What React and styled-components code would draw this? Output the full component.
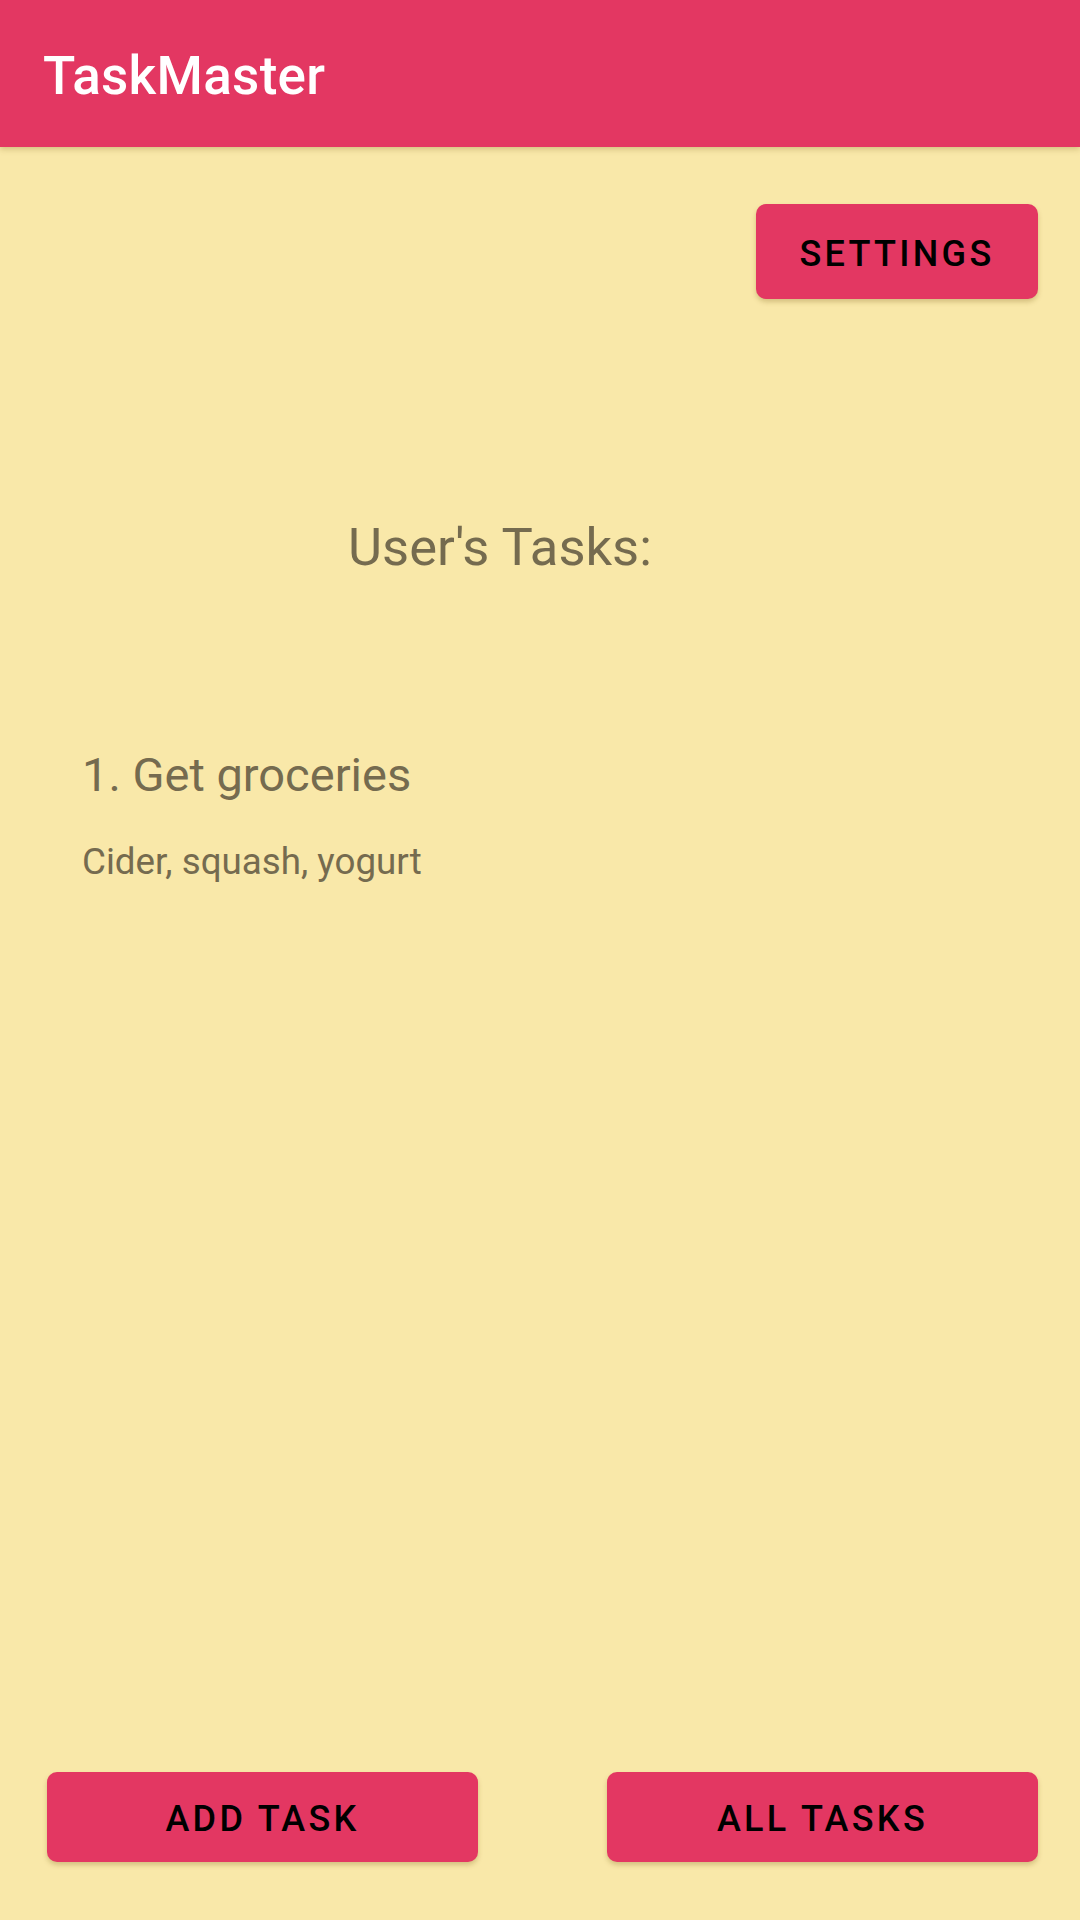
import React from 'react';
import styled, { createGlobalStyle } from 'styled-components';

const GlobalStyle = createGlobalStyle`
	html, body {
		margin: 0;
		padding: 0;
		background: #f9e8a9;
	}
	* {
		box-sizing: border-box;
	}
`;

const Page = styled.div`
	width: 1080px;
	min-height: 1920px;
	display: flex;
	flex-direction: column;
	background: #f9e8a9;
	font-family: Roboto, 'Noto Sans', sans-serif;
`;

const AppBar = styled.header`
	height: 147px;
	background: #e33762;
	display: flex;
	align-items: center;
	padding: 5px 0 0 43px;
	box-shadow: 0 2px 6px rgba(120, 90, 20, 0.3);
	position: relative;
	z-index: 1;

	> h1 {
		margin: 0;
		color: #ffffff;
		font-size: 53px;
		font-weight: 500;
		line-height: 1;
		letter-spacing: 0.3px;
	}
`;

const Content = styled.main`
	flex: 1;
	display: flex;
	flex-direction: column;
`;

const TopRow = styled.div`
	display: flex;
	justify-content: flex-end;
	padding: 57px 42px 0 0;
`;

const Button = styled.button`
	width: ${(p) => p.$width}px;
	height: ${(p) => p.$height}px;
	border: none;
	border-radius: 10px;
	background: #e33762;
	color: #000000;
	font-family: Roboto, 'Noto Sans', sans-serif;
	font-size: 36px;
	font-weight: 500;
	letter-spacing: 3.3px;
	text-transform: uppercase;
	box-shadow: 0 3px 5px rgba(120, 90, 20, 0.28);
	cursor: pointer;
	padding: 4px 0 0;
`;

const Heading = styled.h2`
	margin: 218px 0 0 348px;
	font-size: 52.5px;
	font-weight: 400;
	line-height: 1.172;
	color: #756b4f;
`;

const Task = styled.div`
	display: flex;
	flex-direction: column;
	padding-left: 82px;
	margin-top: 168px;
	color: #756b4f;

	> h3 {
		margin: 0;
		font-size: 47px;
		font-weight: 400;
		line-height: 1.172;
	}

	> p {
		margin: 38px 0 0;
		font-size: 36.75px;
		font-weight: 400;
		line-height: 1.172;
	}
`;

const Spacer = styled.div`
	flex: 1;
`;

const BottomRow = styled.div`
	display: flex;
	justify-content: space-between;
	padding: 0 42px 58px 47px;
`;

function App() {
	return (
		<Page>
			<GlobalStyle />
			<AppBar>
				<h1>TaskMaster</h1>
			</AppBar>
			<Content>
				<TopRow>
					<Button $width={282} $height={95}>Settings</Button>
				</TopRow>
				<Heading>User's Tasks:</Heading>
				<Task>
					<h3>1. Get groceries</h3>
					<p>Cider, squash, yogurt</p>
				</Task>
				<Spacer />
				<BottomRow>
					<Button $width={431} $height={90}>Add Task</Button>
					<Button $width={431} $height={90}>All Tasks</Button>
				</BottomRow>
			</Content>
		</Page>
	);
}

export default App;
